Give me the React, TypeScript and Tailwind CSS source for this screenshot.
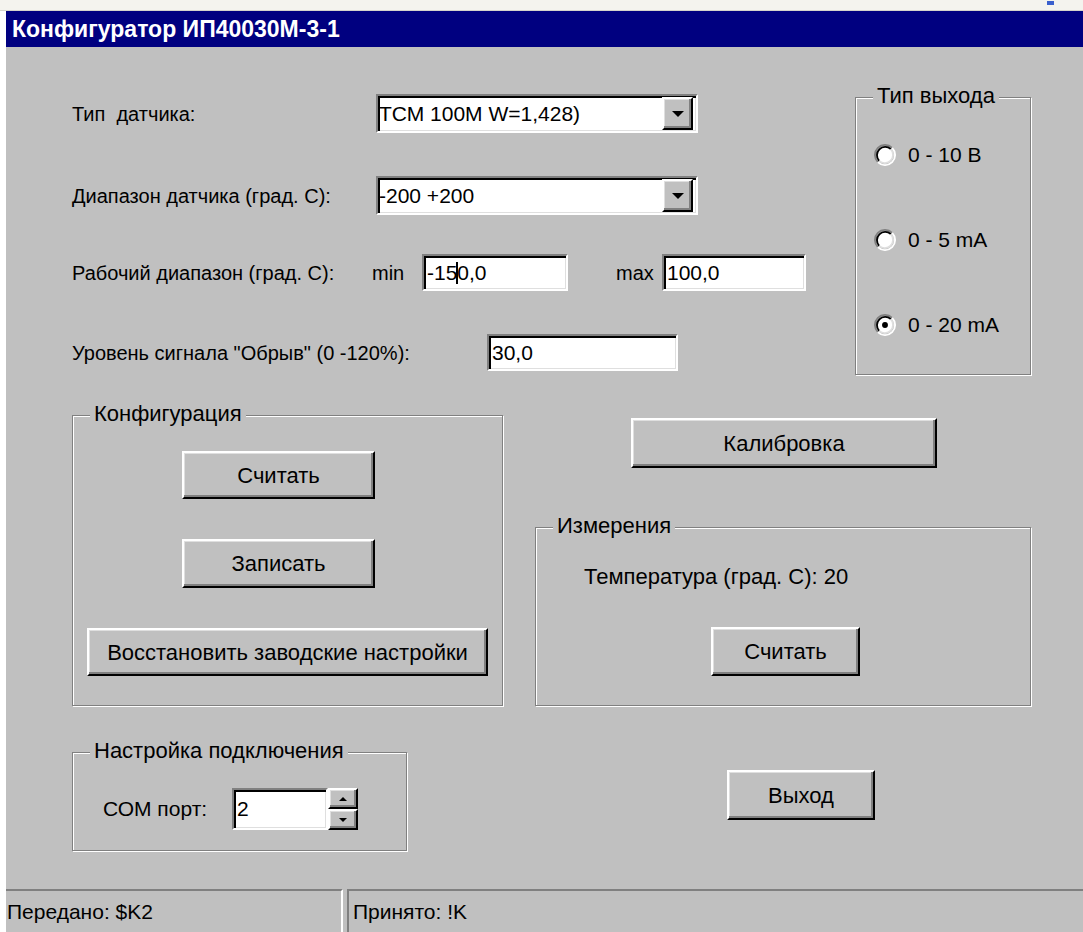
import type { ReactNode } from 'react';

type BoxProps = { children?: ReactNode; className?: string };

// Win98-style raised bevel (buttons, combo arrow, spinner halves)
function Raised({ children, className = '' }: BoxProps) {
  return (
    <div
      className={`flex items-center justify-center bg-[#c0c0c0] border-2 border-t-white border-l-white border-r-black border-b-black shadow-[inset_-2px_-2px_0_#808080,inset_1px_1px_0_#dfdfdf] ${className}`}
    >
      {children}
    </div>
  );
}

// Sunken white edit field
function Field({ children, className = '' }: BoxProps) {
  return (
    <div
      className={`flex items-center bg-white text-[21px] border-2 border-t-[#808080] border-l-[#808080] border-r-white border-b-white shadow-[inset_2px_2px_0_#000,inset_-1px_-1px_0_#dfdfdf] ${className}`}
    >
      {children}
    </div>
  );
}

function Arrow({ up = false, small = false }: { up?: boolean; small?: boolean }) {
  const w = small ? 8 : 12;
  const h = small ? 4 : 6;
  return (
    <svg width={w} height={h} viewBox={`0 0 ${w} ${h}`}>
      {up ? (
        <polygon points={`0,${h} ${w},${h} ${w / 2},0`} fill="#000" />
      ) : (
        <polygon points={`0,0 ${w},0 ${w / 2},${h}`} fill="#000" />
      )}
    </svg>
  );
}

function Combo({ value }: { value: string }) {
  return (
    <Field className="w-[322px] h-[39px] pl-[1px] pr-[3px] justify-between">
      <span>{value}</span>
      <Raised className="w-[31px] h-[33px]">
        <Arrow />
      </Raised>
    </Field>
  );
}

// etched group frame: grey line with a white line beside it
function Group({ title, children, className = '' }: BoxProps & { title: string }) {
  return (
    <div
      className={`relative border-[1.5px] border-[#808080] shadow-[1px_1px_0_#fff,inset_1px_1px_0_#fff] ${className}`}
    >
      <span className="absolute -top-[15px] left-[17px] bg-[#c0c0c0] px-[4px] text-[22px] leading-[26px]">
        {title}
      </span>
      {children}
    </div>
  );
}

function Radio({ label, checked = false }: { label: string; checked?: boolean }) {
  return (
    <div className="flex items-center h-[24px] gap-[12px] text-[21px]">
      <svg width="22" height="22" viewBox="0 0 24 24">
        <circle cx="12" cy="12" r="9" fill="#fff" />
        <path d="M4.22 19.78A11 11 0 0 1 19.78 4.22" stroke="#808080" strokeWidth="2" fill="none" />
        <path d="M19.78 4.22A11 11 0 0 1 4.22 19.78" stroke="#fff" strokeWidth="2" fill="none" />
        <path d="M5.64 18.36A9 9 0 0 1 18.36 5.64" stroke="#000" strokeWidth="2" fill="none" />
        <path d="M18.36 5.64A9 9 0 0 1 5.64 18.36" stroke="#dfdfdf" strokeWidth="2" fill="none" />
        {checked && <circle cx="12" cy="12" r="3.2" fill="#000" />}
      </svg>
      <span>{label}</span>
    </div>
  );
}

export default function App() {
  return (
    <div className="w-[1083px] h-[932px] flex flex-col bg-white text-[20px] text-black font-['Liberation_Sans',Arial,sans-serif] overflow-hidden">
      {/* strip above the window */}
      <div className="h-[11px] shrink-0 bg-[#f4f3ee] border-b border-[#d4d3cc] flex justify-end pr-[29px]">
        <span className="w-[7px] h-[4px] mt-[1px] bg-[#3a5fcd]" />
      </div>

      <div className="flex-1 flex">
        <div className="w-[6px] bg-white" />

        <div className="flex-1 flex flex-col bg-[#c0c0c0]">
          {/* caption */}
          <div className="h-[36px] shrink-0 bg-[#000080] flex items-center pl-[6px]">
            <span className="text-white font-bold text-[23px] leading-none">Конфигуратор ИП40030М-3-1</span>
          </div>

          <div className="flex-1 flex flex-col pl-[66px]">
            {/* parameters + output type */}
            <div className="flex items-start">
              <div className="w-[783px] pt-[47px] flex flex-col">
                <div className="flex items-center h-[39px]">
                  <span className="w-[304px]">Тип&nbsp; датчика:</span>
                  <Combo value="ТСМ 100М W=1,428)" />
                </div>
                <div className="flex items-center h-[39px] mt-[43px]">
                  <span className="w-[304px]">Диапазон датчика (град. С):</span>
                  <Combo value="-200 +200" />
                </div>
                <div className="flex items-center h-[37px] mt-[39px]">
                  <span className="w-[300px]">Рабочий диапазон (град. С):</span>
                  <span className="w-[50px]">min</span>
                  <Field className="w-[146px] h-[37px] pl-[3px]">
                    <span>-15</span>
                    <span className="inline-block w-[2px] h-[22px] bg-black -mx-[1px]" />
                    <span>0,0</span>
                  </Field>
                  <span className="w-[46px] ml-[48px]">max</span>
                  <Field className="w-[144px] h-[37px] pl-[3px]">100,0</Field>
                </div>
                <div className="flex items-center h-[37px] mt-[43px]">
                  <span className="w-[415px]">Уровень сигнала "Обрыв" (0 -120%):</span>
                  <Field className="w-[191px] h-[37px] pl-[3px]">30,0</Field>
                </div>
              </div>

              <Group title="Тип выхода" className="w-[176px] h-[278px] mt-[50px] pt-[45px] pl-[18px] flex flex-col gap-[61px]">
                <Radio label="0 - 10 В" />
                <Radio label="0 - 5 mA" />
                <Radio label="0 - 20 mA" checked />
              </Group>
            </div>

            {/* configuration + calibration / measurement */}
            <div className="flex items-start mt-[40px] text-[22px]">
              <Group title="Конфигурация" className="w-[431px] h-[291px] pt-[35px] flex flex-col items-start">
                <Raised className="w-[193px] h-[48px] ml-[109px]">Считать</Raised>
                <Raised className="w-[193px] h-[49px] ml-[109px] mt-[40px]">Записать</Raised>
                <Raised className="w-[401px] h-[48px] ml-[14px] mt-[40px]">Восстановить заводские настройки</Raised>
              </Group>

              <div className="ml-[32px] flex flex-col items-start">
                <Raised className="w-[306px] h-[50px] ml-[96px] mt-[3px]">Калибровка</Raised>
                <Group title="Измерения" className="w-[496px] h-[179px] mt-[59px] pt-[37px] flex flex-col items-start">
                  <span className="ml-[48px] leading-[24px]">Температура (град. С): 20</span>
                  <Raised className="w-[149px] h-[49px] ml-[175px] mt-[38px]">Считать</Raised>
                </Group>
              </div>
            </div>

            {/* connection + exit */}
            <div className="flex items-start mt-[46px]">
              <Group title="Настройка подключения" className="w-[335px] h-[99px] pt-[35px] pl-[30px] flex items-start">
                <span className="w-[129px] text-[21px] leading-[42px]">СОМ порт:</span>
                <Field className="w-[96px] h-[42px] pl-[3px]">2</Field>
                <div className="flex flex-col">
                  <Raised className="w-[30px] h-[21px]">
                    <Arrow up small />
                  </Raised>
                  <Raised className="w-[30px] h-[21px]">
                    <Arrow small />
                  </Raised>
                </div>
              </Group>
              <Raised className="w-[148px] h-[50px] ml-[320px] mt-[18px] text-[22px]">Выход</Raised>
            </div>
          </div>

          {/* status bar */}
          <div className="h-[43px] shrink-0 flex text-[21px]">
            <div className="w-[337px] border-t-2 border-t-[#808080] border-r-2 border-r-white flex items-center pl-[1px]">
              Передано: $K2
            </div>
            <div className="flex-1 ml-[4px] border-t-2 border-t-[#808080] border-l-2 border-l-[#808080] flex items-center pl-[4px]">
              Принято: !K
            </div>
          </div>
        </div>
      </div>
    </div>
  );
}
